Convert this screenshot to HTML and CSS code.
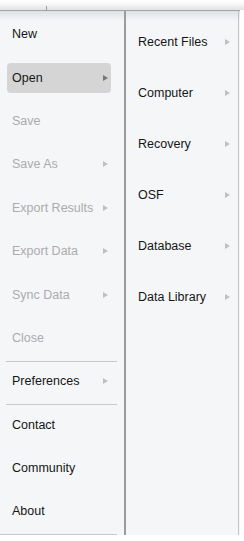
FILE: index.html
```html
<!DOCTYPE html>
<html lang="en">
<head>
    <meta charset="UTF-8">
    <title>File menu</title>
    <link rel="stylesheet" href="styles.css">
</head>
<body>
<div class="topbar"><span class="tick"></span></div>
<div class="menu">
    <div class="main">
        <div class="item"><div class="row">New</div></div>
        <div class="item active"><div class="row">Open<span class="arrow"></span></div></div>
        <div class="item off"><div class="row">Save</div></div>
        <div class="item off"><div class="row">Save As<span class="arrow"></span></div></div>
        <div class="item off"><div class="row">Export Results<span class="arrow"></span></div></div>
        <div class="item off"><div class="row">Export Data<span class="arrow"></span></div></div>
        <div class="item off"><div class="row">Sync Data<span class="arrow"></span></div></div>
        <div class="item off"><div class="row">Close</div></div>
        <div class="sep"></div>
        <div class="item"><div class="row">Preferences<span class="arrow"></span></div></div>
        <div class="sep"></div>
        <div class="item"><div class="row">Contact</div></div>
        <div class="item"><div class="row">Community</div></div>
        <div class="item"><div class="row">About</div></div>
        <div class="sep last"></div>
    </div>
    <div class="sub">
        <div class="subitem">Recent Files<span class="arrow"></span></div>
        <div class="subitem">Computer<span class="arrow"></span></div>
        <div class="subitem">Recovery<span class="arrow"></span></div>
        <div class="subitem">OSF<span class="arrow"></span></div>
        <div class="subitem">Database<span class="arrow"></span></div>
        <div class="subitem">Data Library<span class="arrow"></span></div>
    </div>
</div>
</body>
</html>
```
FILE: styles.css
```css
body {
    margin: 0;
    background: #fff;
    font-family: "Liberation Sans", Arial, sans-serif;
    font-size: 12.5px;
    color: #161616;
}
.topbar {
    position: relative;
    height: 10px;
    background: linear-gradient(#fff 0, #fbfbfb 3px, #e2e2e2 10px);
}
.tick {
    position: absolute;
    left: 46px;
    top: 6px;
    width: 1px;
    height: 4px;
    background: #9a9a9a;
}
.menu {
    display: flex;
    width: 240px;
    height: 525px;
    box-sizing: border-box;
    border-top: 1px solid #a4a4a4;
    background: linear-gradient(#dfe2e5 0, #f4f6f8 10px);
}
.main {
    width: 124px;
    padding-top: 1.5px;
    border-right: 2px solid #9c9c9c;
}
.item {
    height: 43.4px;
    display: flex;
    align-items: center;
}
.row {
    flex: 1;
    height: 30px;
    margin: 0 13px 0 7px;
    padding: 0 3px 0 5px;
    display: flex;
    align-items: center;
    border-radius: 4px;
}
.active .row {
    background: #d5d5d5;
}
.off {
    color: #acacac;
}
.arrow {
    margin-left: auto;
    width: 0;
    height: 0;
    border-left: 5px solid #c0c0c0;
    border-top: 3px solid transparent;
    border-bottom: 3px solid transparent;
}
.active .arrow {
    border-left-color: #777;
}
.sep {
    height: 1px;
    margin: 1px 7px -2px 6px;
    background: #c9c9c9;
}
.sep.last {
    margin-left: 0;
}
.sub {
    width: 112px;
    padding-top: 5px;
    border-right: 1px solid #c4c4c4;
}
.subitem {
    height: 51px;
    padding: 0 8px 0 12px;
    display: flex;
    align-items: center;
}
```
